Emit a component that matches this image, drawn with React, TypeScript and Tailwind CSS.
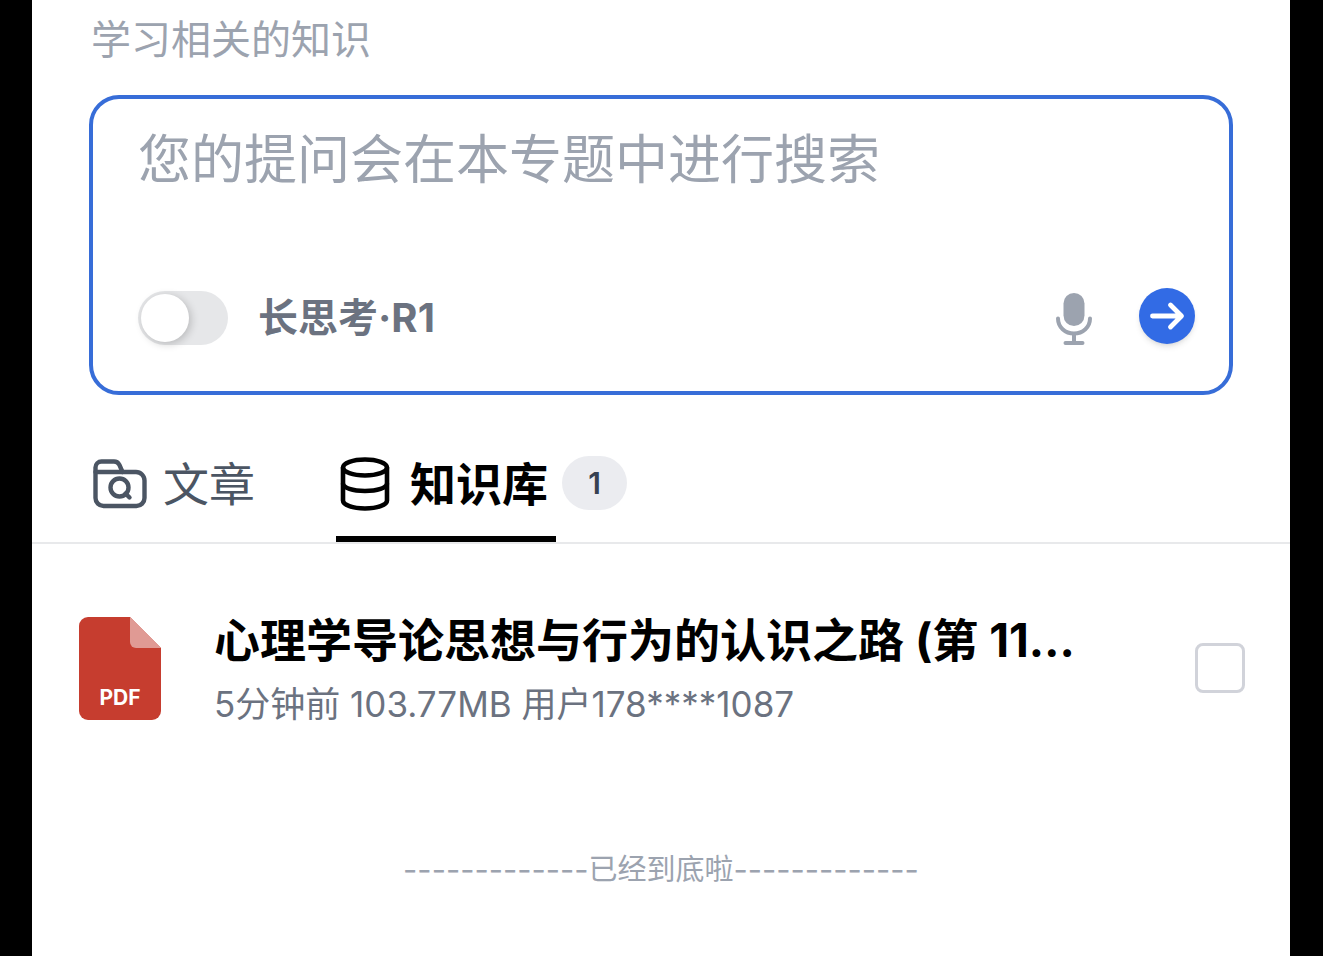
import React, { useState } from 'react';

interface KnowledgeFile {
  id: number;
  title: string;
  meta: string;
}

const files: KnowledgeFile[] = [
  {
    id: 1,
    title: '心理学导论思想与行为的认识之路 (第 11…',
    meta: '5分钟前 103.77MB 用户178****1087',
  },
];

function FolderSearchIcon() {
  return (
    <svg width="54" height="50" viewBox="0 0 54 50" fill="none" stroke="currentColor" strokeWidth="4.400" strokeLinecap="round" strokeLinejoin="round" aria-hidden="true">
      <path d="M2.500 13V8.500a6 6 0 0 1 6-6h12.500a6 6 0 0 1 5.300 3.200L29.500 13" />
      <path d="M2.500 13H43a8.500 8.500 0 0 1 8.500 8.500V39a8 8 0 0 1-8 8h-33a8 8 0 0 1-8-8z" />
      <circle cx="26.500" cy="28.500" r="9" />
      <path d="m32.500 34.500 4 4" />
    </svg>
  );
}

function DatabaseIcon() {
  return (
    <svg width="50" height="54" viewBox="0 0 50 54" fill="none" stroke="currentColor" strokeWidth="4.600" aria-hidden="true">
      <ellipse cx="25" cy="10.500" rx="22" ry="8" />
      <path d="M3 10.500v33c0 4.400 9.800 8 22 8s22-3.600 22-8v-33" />
      <path d="M3 26.500c0 4.400 9.800 7.500 22 7.500s22-3.100 22-7.500" />
    </svg>
  );
}

function MicIcon() {
  return (
    <svg width="38" height="54" viewBox="0 0 38 54" fill="none" stroke="currentColor" strokeWidth="4" strokeLinecap="round" aria-hidden="true">
      <rect x="8.500" y="2" width="21" height="33" rx="10.500" fill="currentColor" stroke="none" />
      <path d="M3 27.500C3 36 10 42.500 19 42.500S35 36 35 27.500" />
      <path d="M19 43v9M10.500 52h17" />
    </svg>
  );
}

function ArrowIcon() {
  return (
    <svg width="56" height="56" viewBox="0 0 56 56" fill="none" stroke="currentColor" strokeWidth="4.800" strokeLinecap="round" strokeLinejoin="round" aria-hidden="true">
      <path d="M13.500 28h28M31.500 17 42.500 28l-11 11" />
    </svg>
  );
}

function PdfIcon() {
  return (
    <svg width="82" height="103" viewBox="0 0 82 103" className="shrink-0" role="img" aria-label="PDF">
      <path d="M9 0h42l31 31v63a9 9 0 0 1-9 9H9a9 9 0 0 1-9-9V9a9 9 0 0 1 9-9z" fill="#c63d2f" />
      <path d="M51 0l31 31H57a6 6 0 0 1-6-6z" fill="#e09a94" />
      <text x="41" y="88" textAnchor="middle" fill="#fff" className="text-[21px] font-bold">PDF</text>
    </svg>
  );
}

export default function App() {
  const [question, setQuestion] = useState('');
  const [deepThink, setDeepThink] = useState(false);
  const [tab, setTab] = useState('library');
  const [selected, setSelected] = useState<number[]>([]);

  const toggleFile = (id: number) => {
    setSelected((prev) => (prev.includes(id) ? prev.filter((x) => x !== id) : [...prev, id]));
  };

  const tabClass = (name: string) =>
    tab === name ? 'border-black text-black font-bold' : 'border-transparent text-[#4b5563]';

  return (
    <div className="min-h-screen bg-black pr-[33px] pl-8 font-['Inter','Noto_Sans_CJK_SC',sans-serif]">
      <main className="min-h-screen bg-white" lang="zh-CN">
        <div className="px-[57px] pt-3">
          <p className="px-0.5 text-[40px] leading-[56px] text-[#9ca3af]">学习相关的知识</p>

          <form
            onSubmit={(e) => e.preventDefault()}
            className="mt-[27px] rounded-[30px] border-4 border-[#376dd8] pt-[25px] pr-[34px] pb-[47px] pl-[45px]"
          >
            <textarea
              aria-label="提问"
              rows={2}
              value={question}
              onChange={(e) => setQuestion(e.target.value)}
              placeholder="您的提问会在本专题中进行搜索"
              className="block w-full resize-none text-[53px] leading-[72px] outline-none placeholder:text-[#9ca3af]"
            />
            <div className="mt-5 flex h-14 items-center justify-between">
              <label className="flex items-center gap-[30px] pt-1 text-[40px] leading-[56px] font-bold text-[#6b7280]">
                <span className="flex h-[54px] w-[90px] rounded-full bg-[#e6e7e9] p-[3px] has-checked:justify-end has-checked:bg-[#2f6be6]">
                  <input
                    type="checkbox"
                    role="switch"
                    checked={deepThink}
                    onChange={(e) => setDeepThink(e.target.checked)}
                    className="size-12 appearance-none rounded-full bg-white shadow-[2px_2px_8px_rgba(0,0,0,0.2)]"
                  />
                </span>
                长思考·R1
              </label>
              <div className="flex items-center gap-[46px]">
                <button type="button" aria-label="语音输入" className="pt-1 text-[#9ca3af]">
                  <MicIcon />
                </button>
                <button type="submit" aria-label="发送" className="rounded-full bg-[#326be5] text-white shadow-md">
                  <ArrowIcon />
                </button>
              </div>
            </div>
          </form>
        </div>

        <nav className="mt-[57px] flex items-start border-b-2 border-[#e8e9eb] px-[57px]">
          <button
            type="button"
            onClick={() => setTab('articles')}
            className={`flex items-center gap-4 border-b-[6px] px-1 pb-5 text-[46px] leading-[64px] ${tabClass('articles')}`}
          >
            <FolderSearchIcon />
            文章
          </button>
          <button
            type="button"
            onClick={() => setTab('library')}
            className={`ml-[77px] flex items-center gap-5 border-b-[6px] pr-2 pl-1 pb-5 text-[46px] leading-[64px] ${tabClass('library')}`}
          >
            <DatabaseIcon />
            知识库
          </button>
          <span className="mt-1 ml-[6px] flex h-[54px] w-[65px] items-center justify-center rounded-full bg-[#ebecf0] text-[30px] font-semibold text-[#374151]">
            {files.length}
          </span>
        </nav>

        <ul className="pt-16 pr-[45px] pl-[47px]">
          {files.map((file) => (
            <li key={file.id} className="flex items-center">
              <PdfIcon />
              <div className="mr-8 ml-[53px] min-w-0 flex-1">
                <h3 className="truncate text-[46px] leading-[64px] font-bold text-black">{file.title}</h3>
                <p className="mt-2 truncate text-[35px] leading-[48px] text-[#6b7280]">{file.meta}</p>
              </div>
              <input
                type="checkbox"
                aria-label={file.title}
                checked={selected.includes(file.id)}
                onChange={() => toggleFile(file.id)}
                className="size-[50px] shrink-0 appearance-none rounded-lg border-3 border-[#d1d3da] checked:border-[#326be5] checked:bg-[#326be5]"
              />
            </li>
          ))}
        </ul>

        <p className="mt-[122px] flex items-center justify-center pb-16 text-[29px] leading-[40px] text-[#9ca3af]">
          <span className="text-[31px]">-------------</span>
          已经到底啦
          <span className="text-[31px]">-------------</span>
        </p>
      </main>
    </div>
  );
}
